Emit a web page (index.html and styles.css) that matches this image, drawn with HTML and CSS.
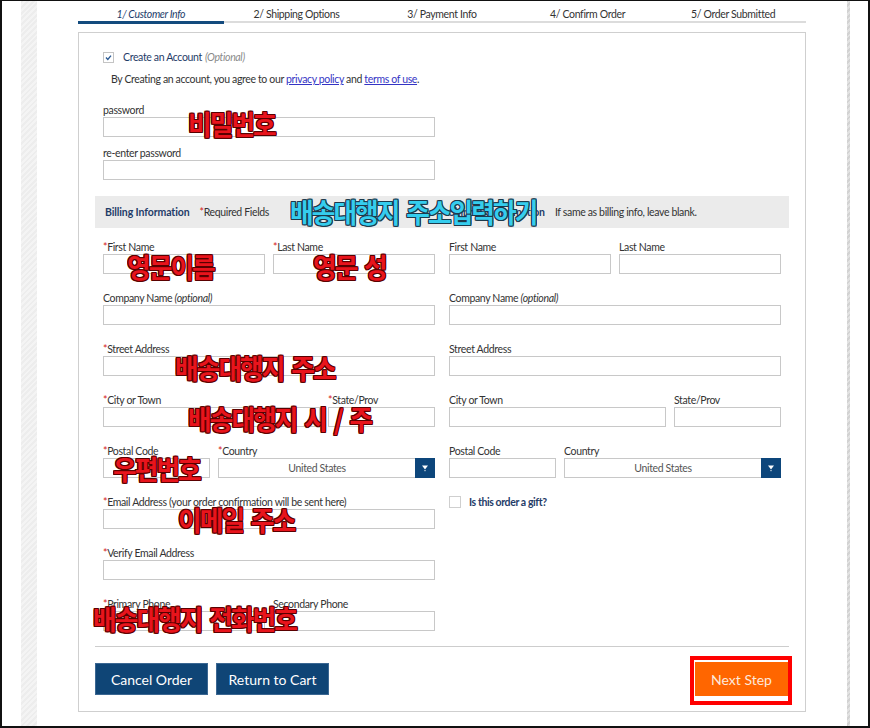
FILE: index.html
```html
<!DOCTYPE html>
<html>
<head>
<meta charset="utf-8">
<link rel="stylesheet" href="styles.css">
</head>
<body>
<div class="frame">
  <div class="gutter"></div>
  <div class="hatch"></div>
  <main class="main">
    <nav class="tabs">
      <div class="tab active">1/ Customer Info</div>
      <div class="tab">2/ Shipping Options</div>
      <div class="tab">3/ Payment Info</div>
      <div class="tab">4/ Confirm Order</div>
      <div class="tab">5/ Order Submitted</div>
    </nav>
    <div class="box">
      <div class="acct">
        <span class="cb"><svg width="9" height="9" viewBox="0 0 9 9"><path d="M2 4.6l1.8 1.8L7 2.6" fill="none" stroke="#2b5a94" stroke-width="1.4"/></svg></span>
        <span class="acct-title">Create an Account</span>
        <em class="opt">(Optional)</em>
      </div>
      <p class="agree">By Creating an account, you agree to our <a href="#">privacy policy</a> and <a href="#">terms of use</a>.</p>
      <div class="pw">
        <div class="field pwf"><label>password</label><div class="inp"></div></div>
        <div class="field pwf last"><label>re-enter password</label><div class="inp"></div></div>
      </div>
      <div class="band">
        <div class="band-col"><b class="bt">Billing Information</b><span class="req"><i class="ast">*</i>Required Fields</span></div>
        <div class="band-col"><b class="bt">Shipping Information</b><span class="req">If same as billing info, leave blank.</span></div>
      </div>
      <div class="cols">
        <div class="col">
          <div class="row field">
            <div class="w162"><label><i class="ast">*</i>First Name</label><div class="inp"></div></div>
            <div class="w162"><label><i class="ast">*</i>Last Name</label><div class="inp"></div></div>
          </div>
          <div class="field"><label>Company Name <em>(optional)</em></label><div class="inp"></div></div>
          <div class="field"><label><i class="ast">*</i>Street Address</label><div class="inp"></div></div>
          <div class="row field">
            <div class="w217"><label><i class="ast">*</i>City or Town</label><div class="inp"></div></div>
            <div class="w107"><label><i class="ast">*</i>State/Prov</label><div class="inp"></div></div>
          </div>
          <div class="row field">
            <div class="w107"><label><i class="ast">*</i>Postal Code</label><div class="inp"></div></div>
            <div class="w217"><label><i class="ast">*</i>Country</label>
              <div class="inp sel"><span class="sel-txt">United States</span><span class="sel-btn"><svg width="8" height="8" viewBox="0 0 8 8"><path d="M1 1.5h6L4 5.5z" fill="#fff"/><rect x="3.5" y="6" width="1" height="1.2" fill="#fff"/></svg></span></div>
            </div>
          </div>
          <div class="field"><label><i class="ast">*</i>Email Address (your order confirmation will be sent here)</label><div class="inp"></div></div>
          <div class="field"><label><i class="ast">*</i>Verify Email Address</label><div class="inp"></div></div>
          <div class="row field last">
            <div class="w162"><label><i class="ast">*</i>Primary Phone</label><div class="inp"></div></div>
            <div class="w162"><label>Secondary Phone</label><div class="inp"></div></div>
          </div>
        </div>
        <div class="col">
          <div class="row field">
            <div class="w162"><label>First Name</label><div class="inp"></div></div>
            <div class="w162"><label>Last Name</label><div class="inp"></div></div>
          </div>
          <div class="field"><label>Company Name <em>(optional)</em></label><div class="inp"></div></div>
          <div class="field"><label>Street Address</label><div class="inp"></div></div>
          <div class="row field">
            <div class="w217"><label>City or Town</label><div class="inp"></div></div>
            <div class="w107"><label>State/Prov</label><div class="inp"></div></div>
          </div>
          <div class="row field">
            <div class="w107"><label>Postal Code</label><div class="inp"></div></div>
            <div class="w217"><label>Country</label>
              <div class="inp sel"><span class="sel-txt">United States</span><span class="sel-btn"><svg width="8" height="8" viewBox="0 0 8 8"><path d="M1 1.5h6L4 5.5z" fill="#fff"/><rect x="3.5" y="6" width="1" height="1.2" fill="#fff"/></svg></span></div>
            </div>
          </div>
          <div class="gift"><span class="cb2"></span><b class="gift-txt">Is this order a gift?</b></div>
        </div>
      </div>
      <hr class="divider">
      <div class="actions">
        <button class="btn">Cancel Order</button>
        <button class="btn">Return to Cart</button>
        <button class="btn next">Next Step</button>
      </div>

      <span class="ann" style="left:109px;top:77px">비밀번호</span>
      <span class="ann cyan" style="left:211px;top:165px">배송대행지 주소입력하기</span>
      <span class="ann" style="left:48px;top:220px">영문이름</span>
      <span class="ann" style="left:234px;top:220px">영문 성</span>
      <span class="ann" style="left:96px;top:321px">배송대행지 주소</span>
      <span class="ann" style="left:109px;top:372px">배송대행지 시 / 주</span>
      <span class="ann" style="left:34px;top:422px">우편번호</span>
      <span class="ann" style="left:99px;top:473px">이메일 주소</span>
      <span class="ann" style="left:14px;top:572px">배송대행지 전화번호</span>
      <span class="redbox"></span>
    </div>
  </main>
  <div class="stripe"></div>
</div>
</body>
</html>
```

FILE: styles.css
```css
html, body {
  margin: 0;
  padding: 0;
  background: #fff;
}
.frame {
  width: 870px;
  height: 728px;
  box-sizing: border-box;
  border: 2px solid #111;
  border-top-width: 1px;
  display: flex;
  overflow: hidden;
  font-family: Lato, "Open Sans", sans-serif;
  font-size: 10.5px;
  letter-spacing: -0.35px;
  color: #333;
}
.gutter {
  width: 19px;
  flex: none;
}
.hatch {
  width: 16px;
  flex: none;
  background: repeating-linear-gradient(-45deg, #f4f4f4 0 2px, #ededed 2px 4px);
}
.main {
  width: 810px;
  flex: none;
  padding-left: 41px;
  box-sizing: border-box;
}
.stripe {
  width: 3px;
  flex: none;
  background: repeating-linear-gradient(-45deg, #e2e2e2 0 2px, #d2d2d2 2px 4px);
}
.tabs {
  display: flex;
  width: 728px;
  align-items: flex-start;
}
.tab {
  flex: 1;
  padding-top: 6px;
  height: 14px;
  line-height: 14px;
  text-align: center;
  border-bottom: 2px solid #dcdcdc;
  color: #333;
}
.tab.active {
  border-bottom: 3px solid #134b7e;
  color: #1d3c6b;
  font-style: italic;
}
.box {
  position: relative;
  margin-top: 8px;
  width: 728px;
  box-sizing: border-box;
  border: 1px solid #cfcfcf;
  padding: 17px 16px 16px 16px;
}
.acct {
  display: flex;
  align-items: center;
  height: 14px;
  margin-left: 8px;
}
.cb {
  width: 11px;
  height: 11px;
  box-sizing: border-box;
  border: 1px solid #c4c4c4;
  display: flex;
  align-items: center;
  justify-content: center;
  margin-right: 9px;
}
.acct-title {
  color: #1f3c68;
}
.opt {
  color: #8a8a8a;
  margin-left: 3px;
}
.agree {
  margin: 8px 0 0 16px;
  line-height: 14px;
  color: #333;
}
.agree a {
  color: #3434c4;
  text-decoration: underline;
}
.pw {
  margin: 17px 8px 0 8px;
  width: 332px;
}
.field {
  margin-bottom: 17px;
}
.field.pwf {
  margin-bottom: 9px;
}
.field.last {
  margin-bottom: 0;
}
label {
  display: block;
  height: 14px;
  line-height: 14px;
  margin-bottom: 0;
  white-space: nowrap;
}
.ast {
  color: #d41b1b;
  font-style: normal;
}
.inp {
  height: 20px;
  box-sizing: border-box;
  border: 1px solid #c8c8c8;
  background: #fff;
}
.band {
  margin-top: 16px;
  height: 32px;
  background: #ebebeb;
  padding: 0 8px;
  display: grid;
  grid-template-columns: 332px 332px;
  column-gap: 14px;
  align-items: center;
}
.band-col {
  display: flex;
  align-items: center;
}
.band-col:first-child {
  padding-left: 2px;
}
.bt {
  color: #1f3c68;
  font-weight: 700;
  letter-spacing: -0.1px;
  margin-right: 10px;
}
.req {
  color: #333;
}
.cols {
  margin-top: 12px;
  padding: 0 8px;
  display: grid;
  grid-template-columns: 332px 332px;
  column-gap: 14px;
  align-items: start;
}
.row {
  display: flex;
  gap: 8px;
}
.w162 { width: 162px; }
.w217 { width: 217px; }
.w107 { width: 107px; }
.sel {
  display: flex;
  align-items: stretch;
}
.sel-txt {
  flex: 1;
  text-align: center;
  line-height: 18px;
  color: #555;
}
.sel-btn {
  width: 20px;
  margin: -1px -1px -1px 0;
  background: #0d467b;
  display: flex;
  align-items: center;
  justify-content: center;
}
.gift {
  display: flex;
  align-items: center;
  height: 14px;
}
.cb2 {
  width: 12px;
  height: 12px;
  box-sizing: border-box;
  border: 1px solid #cfcfcf;
  margin-right: 8px;
}
.gift-txt {
  color: #1f3c68;
  font-weight: 700;
  letter-spacing: -0.4px;
}
.divider {
  margin: 15px 0 0 0;
  border: 0;
  border-top: 1px solid #cdcdcd;
  height: 0;
}
.actions {
  margin-top: 16px;
  display: flex;
  align-items: center;
  gap: 8px;
  height: 32px;
}
.btn {
  width: 113px;
  height: 32px;
  background: #0f4576;
  border: 1px solid #3b6792;
  color: #fff;
  font-family: Lato, "Open Sans", sans-serif;
  font-size: 14px;
  letter-spacing: 0;
  padding: 0;
}
.btn.next {
  margin-left: auto;
  margin-right: 1px;
  width: 93px;
  height: 34px;
  background: #ff6600;
  border: 0;
  color: #fde9dc;
}
.ann {
  position: absolute;
  font-family: "Noto Sans CJK KR", sans-serif;
  font-weight: 700;
  font-size: 27px;
  line-height: 27px;
  letter-spacing: -2px;
  word-spacing: 4px;
  white-space: nowrap;
  transform: scaleX(0.95);
  transform-origin: 0 0;
  color: #e8141c;
  text-shadow: 1px 0 #5a0000, -1px 0 #5a0000, 0 1px #5a0000, 0 -1px #5a0000,
    1px 1px #5a0000, -1px -1px #5a0000, 1px -1px #5a0000, -1px 1px #5a0000;
}
.ann.cyan {
  color: #35cdee;
  text-shadow: 1px 0 #1c3a4c, -1px 0 #1c3a4c, 0 1px #1c3a4c, 0 -1px #1c3a4c,
    1px 1px #1c3a4c, -1px -1px #1c3a4c, 1px -1px #1c3a4c, -1px 1px #1c3a4c;
}
.redbox {
  position: absolute;
  left: 611px;
  top: 623px;
  width: 102px;
  height: 49px;
  box-sizing: border-box;
  border: 4px solid #ff0000;
}
```
